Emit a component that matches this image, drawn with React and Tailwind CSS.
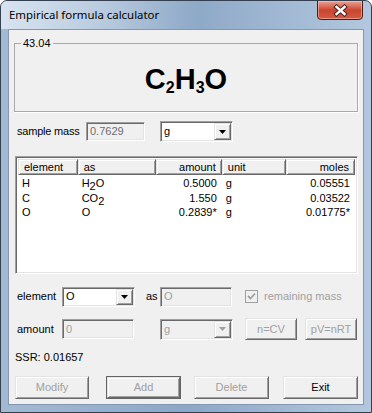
import React from 'react';

const raised =
  'border border-t-[#e3e3e3] border-l-[#e3e3e3] border-r-[#696969] border-b-[#696969] shadow-[inset_1px_1px_0_#fff,inset_-1px_-1px_0_#a0a0a0]';
const sunken =
  'border border-t-[#a0a0a0] border-l-[#a0a0a0] border-r-white border-b-white shadow-[inset_1px_1px_0_#696969,inset_-1px_-1px_0_#e3e3e3]';

function Arrow({ color }) {
  return (
    <svg width="7" height="4" viewBox="0 0 7 4">
      <path d="M0 0h7L3.5 4z" fill={color} />
    </svg>
  );
}

function Combo({ value, className, disabled }) {
  return (
    <div className={`${sunken} ${className} flex p-[1px] ${disabled ? 'bg-[#f0f0f0] text-[#a0a0a0]' : 'bg-white text-black'}`}>
      <div className="flex-1 pl-[2px] flex items-center">{value}</div>
      <div className={`${raised} w-[17px] bg-[#f0f0f0] flex items-center justify-center`}>
        <Arrow color={disabled ? '#a0a0a0' : '#000'} />
      </div>
    </div>
  );
}

function Field({ value, className, dim }) {
  return (
    <div className={`${sunken} ${className} bg-[#f0f0f0] pl-[3px] flex items-center ${dim ? 'text-[#6d6d6d]' : 'text-[#a0a0a0]'}`}>
      {value}
    </div>
  );
}

function Btn({ label, className, disabled, isDefault }) {
  const face = (
    <div className={`${raised} h-full flex items-center justify-center bg-[#f0f0f0] ${disabled ? 'text-[#a0a0a0]' : 'text-black'}`}>
      {label}
    </div>
  );
  if (isDefault) {
    return <div className={`${className} border border-[#646464]`}>{face}</div>;
  }
  return <div className={className}>{face}</div>;
}

const cols = [
  { name: 'element', w: 'w-[60px]', right: false },
  { name: 'as', w: 'w-[79px]', right: false },
  { name: 'amount', w: 'w-[66px]', right: true },
  { name: 'unit', w: 'w-[65px]', right: false },
  { name: 'moles', w: 'w-[69px]', right: true },
];

const sub = 'text-[11px] -bottom-[3px]';

const rows = [
  ['H', <>H<sub className={sub}>2</sub>O</>, '0.5000', 'g', '0.05551'],
  ['C', <>CO<sub className={sub}>2</sub></>, '1.550', 'g', '0.03522'],
  ['O', 'O', '0.2839*', 'g', '0.01775*'],
];

function App() {
  return (
    <div className="w-[372px] h-[413px] overflow-hidden relative rounded-t-[7px] border border-[#34404f] bg-gradient-to-r from-[#a3bad4] via-[#8ca7c7] to-[#b3c8de] text-[11px] font-['Liberation_Sans',Arial,sans-serif]">
      <div className="h-[28px] relative flex items-center pl-[8px]">
        <div className="absolute left-0 top-0 w-[200px] h-[28px] bg-gradient-to-r from-[#e4edf6]/80 via-[#dbe6f1]/50 to-transparent" />
        <span className="relative text-[11.4px] text-black font-['Noto_Sans',sans-serif]">
          Empirical formula calculator
        </span>
        <div className="absolute right-[8px] -top-[1px] w-[46px] h-[20px] rounded-b-[4px] border border-[#4d1c14] bg-gradient-to-b from-[#e9a293] via-[#c9452f] to-[#d65a40] flex items-center justify-center shadow-[inset_0_0_0_1px_rgba(255,210,200,0.5)]">
          <svg width="15" height="13" viewBox="0 0 15 13">
            <path d="M3.5 3l8 7M11.5 3l-8 7" stroke="#4a2a24" strokeWidth="4.5" strokeLinecap="square" />
            <path d="M3.5 3l8 7M11.5 3l-8 7" stroke="#fff" strokeWidth="2.4" strokeLinecap="square" />
          </svg>
        </div>
      </div>

      <div className="ml-[7px] w-[356px] h-[376px] border border-[#8598b0] bg-[#f0f0f0] flex flex-col">
        <div className="mt-[13px] ml-[5px] w-[344px] h-[69px] border border-[#a9a9a9] shadow-[1px_1px_0_#fff] relative flex items-center justify-center pt-[4px]">
          <span className="absolute -top-[7px] left-[6px] px-[2px] bg-[#f0f0f0] leading-[13px] text-black">43.04</span>
          <div className="text-[29px] font-bold text-black leading-none flex items-baseline">
            C<span className="text-[16px] translate-y-[4px]">2</span>H<span className="text-[16px] translate-y-[4px]">3</span>O
          </div>
        </div>

        <div className="mt-[9px] h-[21px] flex items-center">
          <span className="ml-[8px] w-[69px] text-black tracking-[-0.2px]">sample mass</span>
          <Field value="0.7629" dim className="w-[59px] h-[19px]" />
          <Combo value="g" className="ml-[15px] w-[73px] h-[21px]" />
        </div>

        <div className={`${sunken} mt-[14px] ml-[6px] w-[343px] h-[118px] bg-white p-[2px]`}>
          <div className="flex h-[16px] bg-[#f0f0f0]">
            {cols.map((c) => (
              <div
                key={c.name}
                className={`${c.w} ${raised} flex items-center px-[5px] text-black ${c.right ? 'justify-end' : ''}`}
              >
                {c.name}
              </div>
            ))}
          </div>
          <div className="pt-[1px]">
            {rows.map((r, i) => (
              <div key={i} className="flex h-[14.5px] leading-[14.5px] text-black">
                {r.map((cell, j) => (
                  <div key={j} className={`${cols[j].w} px-[4px] ${cols[j].right ? 'text-right pr-[5px]' : ''} whitespace-nowrap`}>
                    {cell}
                  </div>
                ))}
              </div>
            ))}
          </div>
        </div>

        <div className="mt-[12px] h-[21px] flex items-center">
          <span className="ml-[8px] w-[45px] text-black">element</span>
          <Combo value="O" className="w-[73px] h-[20px]" />
          <span className="ml-[11px] w-[14px] text-black">as</span>
          <Field value="O" className="w-[72px] h-[20px]" />
          <div className="ml-[13px] w-[13px] h-[13px] border border-[#a0a0a0] bg-[#f0f0f0] flex items-center justify-center">
            <svg width="9" height="9" viewBox="0 0 9 9">
              <path d="M1 4l2.5 2.5L8 1.5" stroke="#a0a0a0" strokeWidth="1.8" fill="none" />
            </svg>
          </div>
          <span className="ml-[6px] text-[#a0a0a0]">remaining mass</span>
        </div>

        <div className="mt-[11px] h-[22px] flex items-center">
          <span className="ml-[8px] w-[45px] text-black">amount</span>
          <Field value="0" className="w-[72px] h-[20px]" />
          <Combo value="g" disabled className="ml-[26px] w-[73px] h-[21px]" />
          <Btn label="n=CV" disabled className="ml-[12px] w-[52px] h-[22px]" />
          <Btn label="pV=nRT" disabled className="ml-[8px] w-[52px] h-[22px]" />
        </div>

        <div className="mt-[10px] ml-[6px] h-[14px] leading-[14px] text-black">SSR: 0.01657</div>

        <div className="mt-[12px] h-[23px] flex">
          <Btn label="Modify" disabled className="ml-[6px] w-[74px] h-[23px]" />
          <Btn label="Add" disabled isDefault className="ml-[17px] w-[75px] h-[23px]" />
          <Btn label="Delete" disabled className="ml-[13px] w-[75px] h-[23px]" />
          <Btn label="Exit" className="ml-[14px] w-[75px] h-[23px]" />
        </div>
      </div>
    </div>
  );
}

export default App;
